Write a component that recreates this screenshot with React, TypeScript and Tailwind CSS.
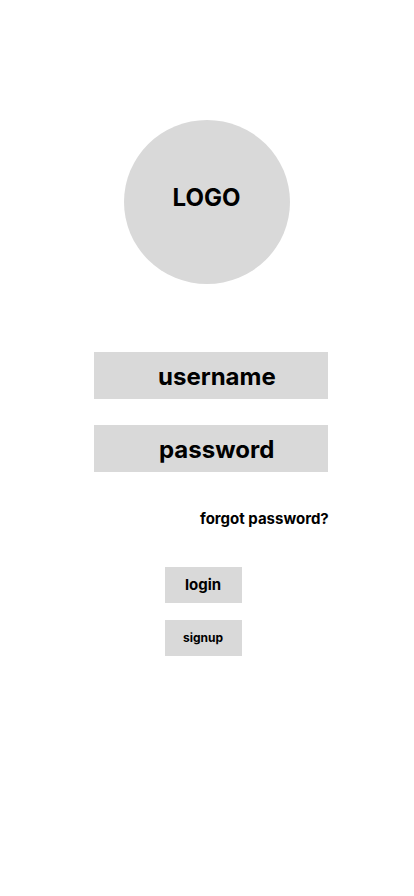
export default function App() {
  return (
    <main className="flex h-[896px] w-[414px] flex-col bg-white font-['Inter',sans-serif] font-bold text-black">
      <div className="mt-[120px] ml-[124px] flex h-[164px] w-[166px] justify-center rounded-[50%] bg-[#d9d9d9] pt-[63px] pr-px text-2xl leading-[29px]">
        LOGO
      </div>
      <form className="mt-[68px] ml-[94px] flex w-[234px] flex-col">
        <div className="h-[47px] bg-[#d9d9d9] pt-[10px] pl-[64px] text-2xl leading-[29px]">username</div>
        <div className="mt-[26px] h-[47px] bg-[#d9d9d9] pt-[10px] pl-[65px] text-2xl leading-[29px]">password</div>
        <a className="mt-[38px] ml-[106px] text-[15px] leading-[18px] whitespace-nowrap">forgot password?</a>
        <button type="button" className="mt-[39px] ml-[71px] h-9 w-[77px] bg-[#d9d9d9] pr-px text-[15px] leading-[18px]">login</button>
        <button type="button" className="mt-[17px] ml-[71px] h-9 w-[77px] bg-[#d9d9d9] pr-px pb-0.5 text-xs leading-[15px]">signup</button>
      </form>
    </main>
  );
}
